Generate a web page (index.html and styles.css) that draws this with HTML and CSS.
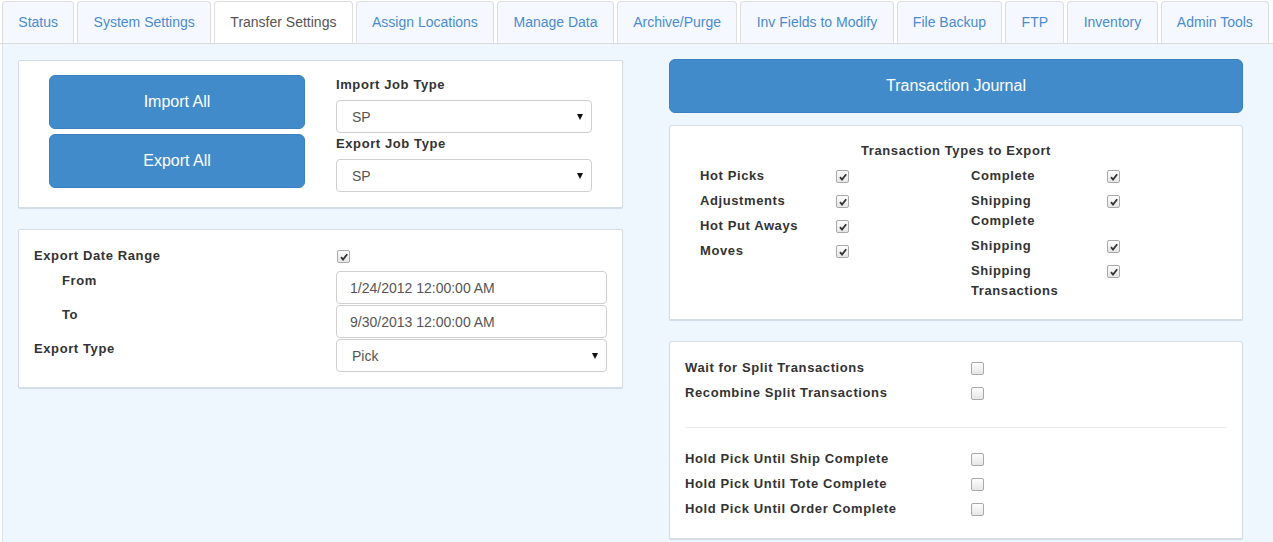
FILE: index.html
```html
<!DOCTYPE html>
<html lang="en">
<head>
<meta charset="utf-8">
<title>Transfer Settings</title>
<link rel="stylesheet" href="styles.css">
</head>
<body>
<ul class="tabs">
  <li class="tab">Status</li>
  <li class="tab">System Settings</li>
  <li class="tab active">Transfer Settings</li>
  <li class="tab">Assign Locations</li>
  <li class="tab">Manage Data</li>
  <li class="tab">Archive/Purge</li>
  <li class="tab">Inv Fields to Modify</li>
  <li class="tab">File Backup</li>
  <li class="tab">FTP</li>
  <li class="tab">Inventory</li>
  <li class="tab">Admin Tools</li>
</ul>
<div class="content">
  <div class="col col-left">
    <div class="panel jobs">
      <div class="btn-col">
        <button class="btn">Import All</button>
        <button class="btn">Export All</button>
      </div>
      <div class="field-col">
        <label class="lbl">Import Job Type</label>
        <div class="select-wrap"><select class="control"><option>SP</option></select></div>
        <label class="lbl">Export Job Type</label>
        <div class="select-wrap"><select class="control"><option>SP</option></select></div>
      </div>
    </div>
    <div class="panel range">
      <div class="row row-check">
        <span class="lbl">Export Date Range</span>
        <span class="cb checked indent1"><svg viewBox="0 0 12 12" width="12" height="12"><path d="M3 6.2 L5 8.5 L9.2 3.2" fill="none" stroke="#333" stroke-width="1.8"/></svg></span>
      </div>
      <div class="row">
        <span class="lbl sub">From</span>
        <input class="control" type="text" value="1/24/2012 12:00:00 AM">
      </div>
      <div class="row">
        <span class="lbl sub">To</span>
        <input class="control" type="text" value="9/30/2013 12:00:00 AM">
      </div>
      <div class="row">
        <span class="lbl">Export Type</span>
        <div class="select-wrap"><select class="control"><option>Pick</option></select></div>
      </div>
    </div>
  </div>
  <div class="col col-right">
    <button class="btn btn-wide">Transaction Journal</button>
    <div class="panel types">
      <div class="title">Transaction Types to Export</div>
      <div class="halves">
        <div class="half">
          <div class="trow"><span class="lbl">Hot Picks</span><span class="cb checked"><svg viewBox="0 0 12 12" width="12" height="12"><path d="M3 6.2 L5 8.5 L9.2 3.2" fill="none" stroke="#333" stroke-width="1.8"/></svg></span></div>
          <div class="trow"><span class="lbl">Adjustments</span><span class="cb checked"><svg viewBox="0 0 12 12" width="12" height="12"><path d="M3 6.2 L5 8.5 L9.2 3.2" fill="none" stroke="#333" stroke-width="1.8"/></svg></span></div>
          <div class="trow"><span class="lbl">Hot Put Aways</span><span class="cb checked"><svg viewBox="0 0 12 12" width="12" height="12"><path d="M3 6.2 L5 8.5 L9.2 3.2" fill="none" stroke="#333" stroke-width="1.8"/></svg></span></div>
          <div class="trow"><span class="lbl">Moves</span><span class="cb checked"><svg viewBox="0 0 12 12" width="12" height="12"><path d="M3 6.2 L5 8.5 L9.2 3.2" fill="none" stroke="#333" stroke-width="1.8"/></svg></span></div>
        </div>
        <div class="half">
          <div class="trow"><span class="lbl">Complete</span><span class="cb checked"><svg viewBox="0 0 12 12" width="12" height="12"><path d="M3 6.2 L5 8.5 L9.2 3.2" fill="none" stroke="#333" stroke-width="1.8"/></svg></span></div>
          <div class="trow"><span class="lbl">Shipping Complete</span><span class="cb checked"><svg viewBox="0 0 12 12" width="12" height="12"><path d="M3 6.2 L5 8.5 L9.2 3.2" fill="none" stroke="#333" stroke-width="1.8"/></svg></span></div>
          <div class="trow"><span class="lbl">Shipping</span><span class="cb checked"><svg viewBox="0 0 12 12" width="12" height="12"><path d="M3 6.2 L5 8.5 L9.2 3.2" fill="none" stroke="#333" stroke-width="1.8"/></svg></span></div>
          <div class="trow"><span class="lbl">Shipping Transactions</span><span class="cb checked"><svg viewBox="0 0 12 12" width="12" height="12"><path d="M3 6.2 L5 8.5 L9.2 3.2" fill="none" stroke="#333" stroke-width="1.8"/></svg></span></div>
        </div>
      </div>
    </div>
    <div class="panel options">
      <div class="orow"><span class="lbl">Wait for Split Transactions</span><span class="cb"></span></div>
      <div class="orow"><span class="lbl">Recombine Split Transactions</span><span class="cb"></span></div>
      <hr class="sep">
      <div class="orow"><span class="lbl">Hold Pick Until Ship Complete</span><span class="cb"></span></div>
      <div class="orow"><span class="lbl">Hold Pick Until Tote Complete</span><span class="cb"></span></div>
      <div class="orow"><span class="lbl">Hold Pick Until Order Complete</span><span class="cb"></span></div>
    </div>
  </div>
</div>
</body>
</html>
```

FILE: styles.css
```css
* { box-sizing: border-box; }
html, body { margin: 0; padding: 0; }
body {
  font-family: "Liberation Sans", Arial, sans-serif;
  font-size: 14px;
  color: #333;
  background: #fff;
  height: 542px;
  overflow: hidden;
}

.tabs {
  list-style: none;
  margin: 0;
  padding: 1px 0 0 2px;
  display: flex;
  gap: 3px;
  border-bottom: 1px solid #dcdcdc;
}
.tab {
  padding: 10px 15.3px 11px;
  line-height: 20px;
  font-size: 14px;
  color: #4a8bd0;
  background: #f5f9ff;
  border: 1px solid #dedede;
  border-bottom: none;
  border-radius: 4px 4px 0 0;
  white-space: nowrap;
}
.tab.active {
  background: #fff;
  color: #555;
}

.content {
  margin-left: 2px;
  border-left: 1px solid #dde3ea;
  background: #eef6fe;
  padding: 15px 0 0 15px;
  display: grid;
  grid-template-columns: 605px 574px;
  column-gap: 46px;
  align-items: start;
  height: 500px;
}
.col-left { padding-top: 1px; }

.panel {
  background: #fff;
  border: 1px solid #d5dde4;
  border-radius: 2px;
  box-shadow: 0 1px 1px rgba(120, 140, 160, 0.25);
}

.btn {
  display: block;
  width: 100%;
  height: 54px;
  border: 1px solid #3b80c0;
  border-radius: 6px;
  background: #428bca;
  color: #fff;
  font-family: "Liberation Sans", Arial, sans-serif;
  font-size: 16px;
  padding: 0;
  cursor: pointer;
}

.lbl {
  display: block;
  font-weight: bold;
  font-size: 13px;
  line-height: 20px;
  letter-spacing: 0.6px;
  color: #333;
}

.control {
  display: block;
  width: 100%;
  height: 33px;
  border: 1px solid #cfcfcf;
  border-radius: 4px;
  background: #fff;
  font-family: "Liberation Sans", Arial, sans-serif;
  font-size: 14px;
  color: #555;
  padding: 6px 13px;
  outline: none;
}
select.control {
  appearance: none;
  -webkit-appearance: none;
  padding-left: 15px;
}
.select-wrap { position: relative; }
.select-wrap::after {
  content: "";
  position: absolute;
  right: 9px;
  top: 14px;
  border-left: 3.5px solid transparent;
  border-right: 3.5px solid transparent;
  border-top: 6px solid #111;
  pointer-events: none;
}

/* job panel */
.jobs {
  display: grid;
  grid-template-columns: 256px 256px;
  column-gap: 31px;
  padding: 14px 30px 15px;
}
.btn-col .btn + .btn { margin-top: 5px; }
.field-col .lbl { margin-bottom: 5px; }
.field-col .select-wrap + .lbl { margin-top: 1px; }

/* range panel */
.range {
  margin-top: 21px;
  padding: 16px 15px 15px;
}
.range .row {
  display: grid;
  grid-template-columns: 302px 271px;
  margin-bottom: 1px;
}
.range .row-check { margin-bottom: 5px; align-items: center; }
.range .row:last-child { margin-bottom: 0; }
.lbl.sub { padding-left: 28px; }
.indent1 { margin-left: 1px; }

/* checkbox */
.cb {
  display: inline-block;
  width: 13px;
  height: 13px;
  border: 1px solid #a9a9a9;
  border-radius: 2px;
  background: linear-gradient(#fdfdfd, #e6e6e6);
  position: relative;
}
.cb svg {
  position: absolute;
  left: 0;
  top: 0;
}

/* right column */
.btn-wide { margin-bottom: 12px; }

.types { padding: 15px 15px 18px; }
.title {
  text-align: center;
  font-weight: bold;
  font-size: 13px;
  line-height: 20px;
  letter-spacing: 0.6px;
  margin-bottom: 5px;
}
.halves {
  display: grid;
  grid-template-columns: 271px 271px;
}
.trow {
  display: grid;
  grid-template-columns: 106px 13px;
  column-gap: 30px;
  padding-left: 15px;
  align-items: start;
  margin-bottom: 5px;
}
.trow:last-child { margin-bottom: 0; }
.trow .cb { margin-top: 4px; }

.options {
  margin-top: 21px;
  padding: 16px 15px 19px;
}
.orow {
  display: grid;
  grid-template-columns: 286px 13px;
  align-items: start;
  margin-bottom: 5px;
}
.orow .cb { margin-top: 4px; }
.orow:last-child { margin-bottom: 0; }
.sep {
  border: none;
  border-top: 1px solid #e8e8e8;
  margin: 24px 0 21px;
  height: 0;
}
```
